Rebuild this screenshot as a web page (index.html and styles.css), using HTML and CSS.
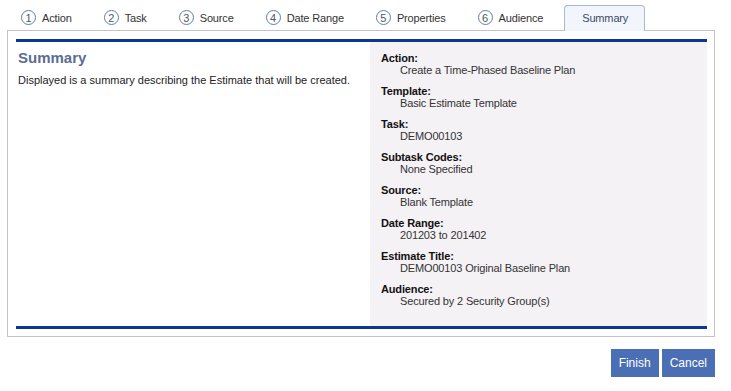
FILE: index.html
```html
<!DOCTYPE html>
<html lang="en">
<head>
    <meta charset="UTF-8">
    <title>Create Estimate - Summary</title>
    <link rel="stylesheet" href="styles.css">
</head>
<body>
    <div class="wizard">
        <div class="tabs">
            <div class="tab"><span class="num">1</span>Action</div>
            <div class="tab"><span class="num">2</span>Task</div>
            <div class="tab"><span class="num">3</span>Source</div>
            <div class="tab"><span class="num">4</span>Date Range</div>
            <div class="tab"><span class="num">5</span>Properties</div>
            <div class="tab"><span class="num">6</span>Audience</div>
            <div class="tab active">Summary</div>
        </div>

        <div class="panel">
            <div class="content">
                <div class="intro">
                    <h2>Summary</h2>
                    <p>Displayed is a summary describing the Estimate that will be created.</p>
                </div>
                <dl class="details">
                    <dt>Action:</dt>
                    <dd>Create a Time-Phased Baseline Plan</dd>
                    <dt>Template:</dt>
                    <dd>Basic Estimate Template</dd>
                    <dt>Task:</dt>
                    <dd>DEMO00103</dd>
                    <dt>Subtask Codes:</dt>
                    <dd>None Specified</dd>
                    <dt>Source:</dt>
                    <dd>Blank Template</dd>
                    <dt>Date Range:</dt>
                    <dd>201203 to 201402</dd>
                    <dt>Estimate Title:</dt>
                    <dd>DEMO00103 Original Baseline Plan</dd>
                    <dt>Audience:</dt>
                    <dd>Secured by 2 Security Group(s)</dd>
                </dl>
            </div>
        </div>

        <div class="actions">
            <button class="btn">Finish</button>
            <button class="btn">Cancel</button>
        </div>
    </div>
</body>
</html>
```

FILE: styles.css
```css
body {
    margin: 0;
    background: #fff;
    font-family: "Liberation Sans", Arial, sans-serif;
    font-size: 11px;
    color: #222;
}
.wizard {
    width: 708px;
    padding-left: 7px;
}
.tabs {
    display: flex;
    align-items: flex-end;
    height: 30px;
}
.tab {
    display: flex;
    align-items: center;
    height: 25px;
    padding: 0 18px 0 14px;
    color: #333;
    letter-spacing: -0.15px;
    box-sizing: border-box;
}
.num {
    display: inline-flex;
    align-items: center;
    justify-content: center;
    width: 13px;
    height: 13px;
    margin-right: 6px;
    border: 1px solid #5b7db7;
    border-radius: 50%;
    color: #555;
    font-size: 11px;
    letter-spacing: 0;
}
.tab.active {
    position: relative;
    z-index: 1;
    height: 26px;
    margin-bottom: -1px;
    margin-left: 3px;
    padding: 0 16px 1px 17px;
    background: #f2f6fc;
    border: 1px solid #a9b9cf;
    border-bottom: none;
    border-radius: 4px 4px 0 0;
    color: #3b4a66;
}
.panel {
    border: 1px solid #c4c4c4;
    padding: 8px 7px 7px 8px;
}
.content {
    display: flex;
    border-top: 3px solid #0b3694;
    border-bottom: 3px solid #0b3694;
    min-height: 283px;
}
.intro {
    width: 354px;
    box-sizing: border-box;
    padding: 7px 2px;
}
.intro h2 {
    margin: 0 0 8px;
    font-size: 15px;
    color: #5a6d92;
}
.intro p {
    margin: 0;
    color: #222;
}
.details {
    flex: 1;
    margin: 0;
    padding: 10px 11px;
    background: #f5f2f6;
    line-height: 12px;
    letter-spacing: -0.15px;
}
.details dt {
    color: #111;
    font-weight: bold;
}
.details dd {
    margin: 0 0 9px 19px;
    color: #333;
}
.actions {
    display: flex;
    justify-content: flex-end;
    gap: 3px;
    margin-top: 12px;
}
.btn {
    height: 28px;
    padding: 0 8px;
    border: none;
    background: #4a6fb4;
    color: #fff;
    font-family: "Liberation Sans", Arial, sans-serif;
    font-size: 12px;
}
```
